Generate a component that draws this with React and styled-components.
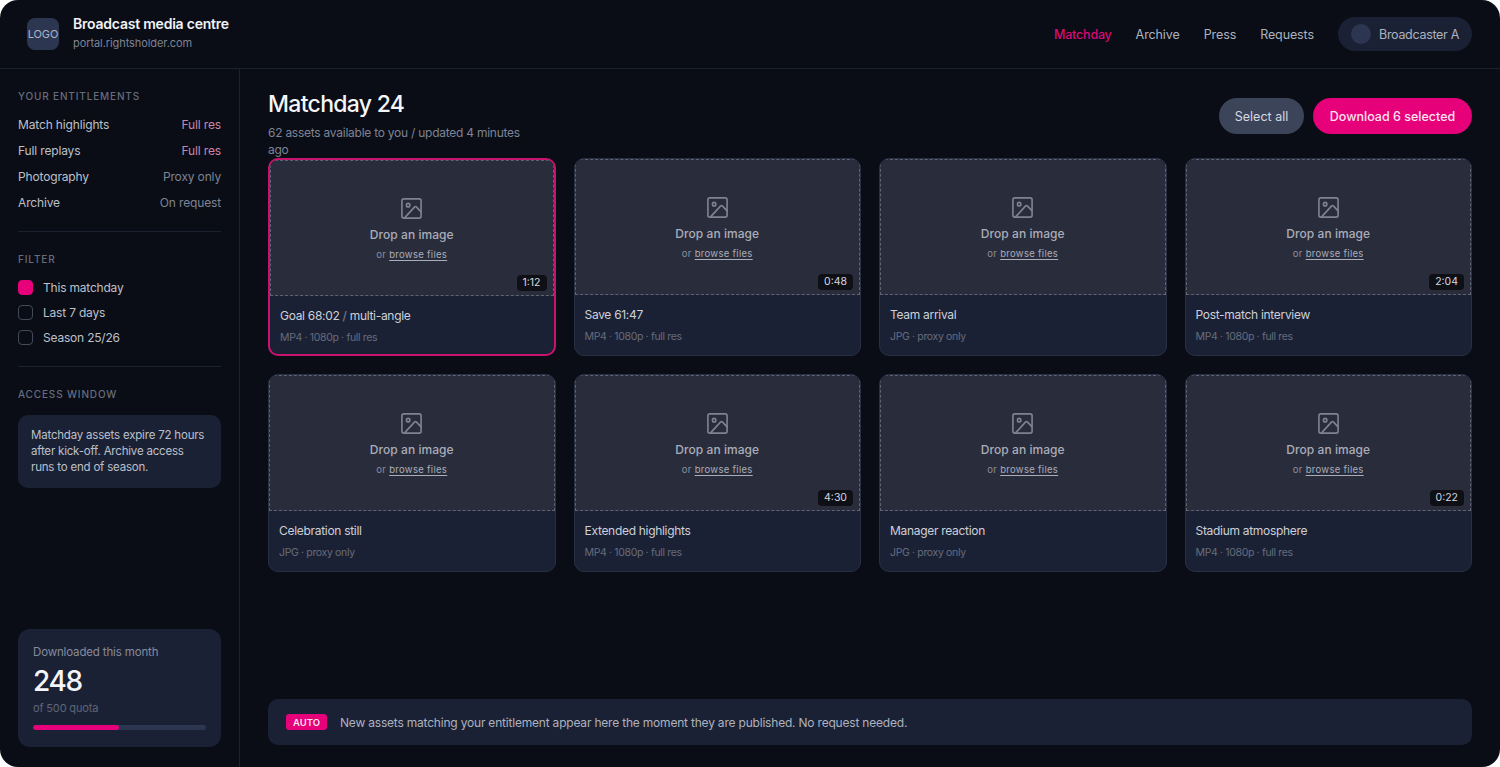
import React from "react";
import styled, { createGlobalStyle } from "styled-components";

const entitlements = [
  { name: "Match highlights", level: "Full res", full: true },
  { name: "Full replays", level: "Full res", full: true },
  { name: "Photography", level: "Proxy only" },
  { name: "Archive", level: "On request" },
];

const filters = [
  { name: "This matchday", on: true },
  { name: "Last 7 days" },
  { name: "Season 25/26" },
];

const assets = [
  { title: "Goal 68:02", extra: "multi-angle", meta: "MP4 · 1080p · full res", time: "1:12", selected: true },
  { title: "Save 61:47", meta: "MP4 · 1080p · full res", time: "0:48" },
  { title: "Team arrival", meta: "JPG · proxy only" },
  { title: "Post-match interview", meta: "MP4 · 1080p · full res", time: "2:04" },
  { title: "Celebration still", meta: "JPG · proxy only" },
  { title: "Extended highlights", meta: "MP4 · 1080p · full res", time: "4:30" },
  { title: "Manager reaction", meta: "JPG · proxy only" },
  { title: "Stadium atmosphere", meta: "MP4 · 1080p · full res", time: "0:22" },
];

const ImageIcon = () => (
  <IconSvg viewBox="0 0 24 24" fill="none" stroke="currentColor" strokeWidth="1.7" strokeLinecap="round" strokeLinejoin="round">
    <rect x="2" y="2" width="20" height="20" rx="2" />
    <circle cx="8.5" cy="8.5" r="1.8" />
    <path d="M22 15.5l-5-5.2a1.2 1.2 0 0 0-1.7 0L5 21.5" />
  </IconSvg>
);

const AssetCard = ({ asset }) => (
  <Card $selected={asset.selected}>
    <Dropzone>
      <ImageIcon />
      <DropTitle>Drop an image</DropTitle>
      <DropHint>or <u>browse files</u></DropHint>
      {asset.time && <Duration>{asset.time}</Duration>}
    </Dropzone>
    <CardBody>
      <CardTitle>
        {asset.title}
        {asset.extra && <> <Slash>/</Slash> {asset.extra}</>}
      </CardTitle>
      <CardMeta>{asset.meta}</CardMeta>
    </CardBody>
  </Card>
);

export default function App() {
  return (
    <>
      <GlobalStyle />
      <Frame>
        <Header>
          <Brand>
            <Logo>LOGO</Logo>
            <BrandText>
              <BrandName>Broadcast media centre</BrandName>
              <BrandUrl>portal.rightsholder.com</BrandUrl>
            </BrandText>
          </Brand>
          <Nav>
            <NavLink $active>Matchday</NavLink>
            <NavLink>Archive</NavLink>
            <NavLink>Press</NavLink>
            <NavLink>Requests</NavLink>
            <Account>
              <Avatar />
              Broadcaster A
            </Account>
          </Nav>
        </Header>
        <Body>
          <Sidebar>
            <Section $space={16}>
              <SectionLabel>Your entitlements</SectionLabel>
              <Entitlements>
                {entitlements.map((e) => (
                  <EntitlementRow key={e.name}>
                    <span>{e.name}</span>
                    <Level $full={e.full}>{e.level}</Level>
                  </EntitlementRow>
                ))}
              </Entitlements>
            </Section>
            <Section $space={16}>
              <SectionLabel>Filter</SectionLabel>
              <Filters>
                {filters.map((f) => (
                  <FilterRow key={f.name}>
                    <Check $on={f.on} />
                    {f.name}
                  </FilterRow>
                ))}
              </Filters>
            </Section>
            <Section $last>
              <SectionLabel>Access window</SectionLabel>
              <AccessNote>
                Matchday assets expire 72 hours after kick-off. Archive access runs to end of season.
              </AccessNote>
            </Section>
            <QuotaCard>
              <QuotaLabel>Downloaded this month</QuotaLabel>
              <QuotaValue>248</QuotaValue>
              <QuotaNote>of 500 quota</QuotaNote>
              <QuotaTrack>
                <QuotaFill style={{ width: `${(248 / 500) * 100}%` }} />
              </QuotaTrack>
            </QuotaCard>
          </Sidebar>
          <Main>
            <TopRow>
              <Heading>
                <Title>Matchday 24</Title>
                <Subtitle>62 assets available to you / updated 4 minutes ago</Subtitle>
              </Heading>
              <Actions>
                <GhostButton>Select all</GhostButton>
                <PrimaryButton>Download 6 selected</PrimaryButton>
              </Actions>
            </TopRow>
            <Grid>
              {assets.map((a) => (
                <AssetCard key={a.title} asset={a} />
              ))}
            </Grid>
            <Notice>
              <Badge>AUTO</Badge>
              New assets matching your entitlement appear here the moment they are published. No request needed.
            </Notice>
          </Main>
        </Body>
      </Frame>
    </>
  );
}

const GlobalStyle = createGlobalStyle`
  html, body {
    margin: 0;
    background: #fff;
  }
  * {
    box-sizing: border-box;
  }
  body {
    font-family: "Inter", "Liberation Sans", sans-serif;
  }
`;

const Frame = styled.div`
  width: 1500px;
  height: 767px;
  display: flex;
  flex-direction: column;
  background: #0a0d16;
  border-radius: 18px;
  overflow: hidden;
  color: #d5d8e0;
`;

const Header = styled.header`
  height: 69px;
  flex: none;
  display: flex;
  align-items: center;
  justify-content: space-between;
  padding: 0 28px 0 27px;
  border-bottom: 1px solid #1c2130;
`;

const Brand = styled.div`
  display: flex;
  align-items: center;
  gap: 14px;
`;

const BrandText = styled.div`
  margin-bottom: 2px;
`;

const Logo = styled.div`
  width: 32px;
  height: 32px;
  border-radius: 8px;
  background: #2d3650;
  color: #aab2c8;
  display: flex;
  align-items: center;
  justify-content: center;
  font-size: 11px;
  letter-spacing: -0.1px;
`;

const BrandName = styled.div`
  font-size: 14px;
  line-height: 18px;
  font-weight: 600;
  letter-spacing: -0.22px;
  color: #f0f2f6;
`;

const BrandUrl = styled.div`
  font-size: 11px;
  line-height: 16px;
  margin-top: 2px;
  letter-spacing: -0.08px;
  color: #7d8494;
`;

const Nav = styled.nav`
  display: flex;
  align-items: center;
  gap: 24px;
`;

const NavLink = styled.a`
  font-size: 12.5px;
  letter-spacing: ${(p) => (p.$active ? "-0.2px" : "-0.1px")};
  color: ${(p) => (p.$active ? "#d80a74" : "#adb2bf")};
  font-weight: ${(p) => (p.$active ? 500 : 400)};
`;

const Account = styled.div`
  height: 34px;
  width: 134px;
  display: flex;
  align-items: center;
  gap: 8px;
  padding: 0 13px;
  border-radius: 17px;
  background: #1b2134;
  color: #adb2bf;
  font-size: 12.5px;
  letter-spacing: -0.3px;
  white-space: nowrap;
`;

const Avatar = styled.span`
  width: 20px;
  height: 20px;
  flex: none;
  border-radius: 50%;
  background: #2d3650;
`;

const Body = styled.div`
  flex: 1;
  min-height: 0;
  display: flex;
`;

const Sidebar = styled.aside`
  width: 240px;
  flex: none;
  display: flex;
  flex-direction: column;
  padding: 20px 18px 20px;
  border-right: 1px solid #1c2130;
`;

const Section = styled.section`
  padding-bottom: ${(p) => (p.$last ? 0 : `${p.$space}px`)};
  margin-bottom: ${(p) => (p.$last ? 0 : "20px")};
  border-bottom: ${(p) => (p.$last ? "none" : "1px solid #1c2130")};
`;

const SectionLabel = styled.h4`
  margin: 0;
  font-size: 10px;
  line-height: 14px;
  font-weight: 500;
  letter-spacing: 0.85px;
  text-transform: uppercase;
  color: #666c7c;
`;

const Entitlements = styled.div`
  margin-top: 8px;
  display: flex;
  flex-direction: column;
`;

const EntitlementRow = styled.div`
  height: 26px;
  display: flex;
  align-items: center;
  justify-content: space-between;
  font-size: 12px;
  letter-spacing: -0.15px;
  color: #bcc0cb;
`;

const Level = styled.span`
  color: ${(p) => (p.$full ? "#c987ab" : "#7d8494")};
`;

const Filters = styled.div`
  margin-top: 9px;
  display: flex;
  flex-direction: column;
`;

const FilterRow = styled.label`
  height: 25px;
  display: flex;
  align-items: center;
  gap: 10px;
  font-size: 12px;
  letter-spacing: -0.2px;
  color: #bcc0cb;
`;

const Check = styled.span`
  width: 15px;
  height: 15px;
  border-radius: 4px;
  background: ${(p) => (p.$on ? "#e6007a" : "transparent")};
  border: 1px solid ${(p) => (p.$on ? "#e6007a" : "#444a5a")};
`;

const AccessNote = styled.div`
  margin-top: 14px;
  padding: 12px 13px 13px;
  border-radius: 10px;
  background: #1b2134;
  font-size: 11.5px;
  line-height: 16px;
  letter-spacing: -0.2px;
  color: #bcc0cb;
`;

const QuotaCard = styled.div`
  margin-top: auto;
  height: 118px;
  padding: 16px 15px 15px;
  border-radius: 12px;
  background: #1b2134;
`;

const QuotaLabel = styled.div`
  font-size: 11.5px;
  line-height: 15px;
  letter-spacing: -0.15px;
  color: #858b9b;
`;

const QuotaValue = styled.div`
  margin-top: 4px;
  font-size: 28px;
  line-height: 34px;
  font-weight: 500;
  letter-spacing: -1.3px;
  color: #f4f5f8;
`;

const QuotaNote = styled.div`
  margin-top: 3px;
  font-size: 11px;
  line-height: 15px;
  letter-spacing: -0.15px;
  color: #5f6677;
`;

const QuotaTrack = styled.div`
  margin-top: 9px;
  height: 5px;
  border-radius: 3px;
  background: #2d3650;
  overflow: hidden;
`;

const QuotaFill = styled.div`
  height: 100%;
  border-radius: 3px;
  background: #e6007a;
`;

const Main = styled.main`
  flex: 1;
  min-width: 0;
  display: flex;
  flex-direction: column;
  padding: 20px 28px 22px;
`;

const TopRow = styled.div`
  display: flex;
  align-items: flex-start;
  justify-content: space-between;
`;

const Heading = styled.div`
  width: 260px;
  height: 69px;
`;

const Title = styled.h1`
  margin: 0;
  font-size: 23px;
  line-height: 30px;
  font-weight: 500;
  letter-spacing: -0.7px;
  color: #f4f5f8;
`;

const Subtitle = styled.p`
  margin: 5px 0 0;
  font-size: 12px;
  line-height: 17px;
  letter-spacing: -0.25px;
  color: #7d8494;
`;

const Actions = styled.div`
  margin-top: 9px;
  display: flex;
  gap: 9px;
`;

const GhostButton = styled.button`
  height: 36px;
  width: 85px;
  border: none;
  border-radius: 18px;
  background: #3c4459;
  color: #d5d8e0;
  font: 400 12.5px "Inter", sans-serif;
`;

const PrimaryButton = styled(GhostButton)`
  width: 159px;
  background: #e6007a;
  color: #fbe3ef;
  font-weight: 500;
`;

const Grid = styled.div`
  display: grid;
  grid-template-columns: repeat(4, 1fr);
  gap: 18px;
`;

const Card = styled.article`
  height: 198px;
  display: flex;
  flex-direction: column;
  border-radius: 10px;
  overflow: hidden;
  background: #1b2134;
  border: ${(p) => (p.$selected ? "2px solid #c8146e" : "1px solid #2a3044")};
`;

const Dropzone = styled.div`
  position: relative;
  height: 136px;
  flex: none;
  display: flex;
  flex-direction: column;
  align-items: center;
  justify-content: center;
  background: #292c3b;
  border: 1px dashed #5f6373;
  color: #7e8391;
`;

const IconSvg = styled.svg`
  width: 23px;
  height: 23px;
  margin-top: 3px;
`;

const DropTitle = styled.div`
  margin-top: 7px;
  font-size: 12px;
  font-weight: 500;
  line-height: 16px;
  letter-spacing: 0.05px;
  color: #a9adb9;
`;

const DropHint = styled.div`
  margin-top: 5px;
  font-size: 9.5px;
  line-height: 14px;
  letter-spacing: 0.3px;
  color: #8b8f9c;

  u {
    text-underline-offset: 2px;
    color: #a9adb9;
  }
`;

const Duration = styled.span`
  position: absolute;
  right: 6px;
  bottom: 4px;
  padding: 0 6px;
  height: 16px;
  line-height: 16px;
  border-radius: 4px;
  background: #0e1016;
  color: #d5d8e0;
  font-size: 10.5px;
`;

const CardBody = styled.div`
  padding: 11px 10px;
`;

const CardTitle = styled.div`
  font-size: 12px;
  line-height: 17px;
  letter-spacing: -0.3px;
  color: #cdd0d9;
`;

const Slash = styled.span`
  color: #7d8494;
`;

const CardMeta = styled.div`
  margin-top: 7px;
  font-size: 10.5px;
  line-height: 14px;
  letter-spacing: -0.35px;
  color: #666c7c;
`;

const Notice = styled.div`
  margin-top: auto;
  height: 46px;
  display: flex;
  align-items: center;
  gap: 13px;
  padding: 0 18px;
  border-radius: 10px;
  background: #1b2134;
  font-size: 12px;
  letter-spacing: -0.2px;
  color: #adb2bf;
`;

const Badge = styled.span`
  width: 41px;
  height: 16px;
  display: flex;
  align-items: center;
  justify-content: center;
  border-radius: 3px;
  background: #e6007a;
  color: #fbe3ef;
  font-size: 9.5px;
  font-weight: 600;
  letter-spacing: 0;
`;
